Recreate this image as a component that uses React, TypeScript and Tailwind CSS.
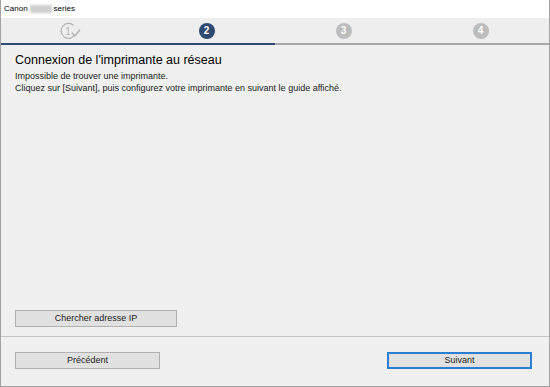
import React from "react";

function StepDone() {
  return (
    <svg width="22" height="18" viewBox="0 0 22 18" className="block">
      <path d="M13.5 3.2 A7.5 7.5 0 1 0 15.2 12.5" fill="none" stroke="#b4b4b4" strokeWidth="1.3" />
      <text x="8" y="12.6" textAnchor="middle" fontSize="10" fill="#b4b4b4" fontFamily="Liberation Sans, Arial, sans-serif">1</text>
      <path d="M12.3 11.2 L14.8 14 L19.5 8.2" fill="none" stroke="#b4b4b4" strokeWidth="1.6" strokeLinecap="round" strokeLinejoin="round" />
    </svg>
  );
}

function StepNum({ n, active }: { n: number; active?: boolean }) {
  return (
    <div
      className={
        "w-[16px] h-[16px] rounded-full flex items-center justify-center text-white text-[10px] font-bold leading-none " +
        (active ? "bg-[#2f4a70]" : "bg-[#bdbdbd]")
      }
    >
      {n}
    </div>
  );
}

export default function App() {
  return (
    <div
      className="w-[550px] h-[387px] flex flex-col bg-[#f0f0f0] border-l border-r border-b border-[#a3a3a3] text-[#1a1a1a]"
      style={{ fontFamily: '"Liberation Sans", Arial, sans-serif' }}
    >
      <div className="h-[18px] bg-white flex items-center pl-[3px] text-[8px] text-black">
        <span>Canon</span>
        <span className="inline-block w-[22px] h-[8px] mx-[2px] bg-[#cfcfcf] blur-[1px]" />
        <span>series</span>
      </div>
      <div className="h-[25px] bg-[#eeeeee] grid grid-cols-4 items-center">
        <div className="flex justify-center pl-[2px]">
          <StepDone />
        </div>
        <div className="flex justify-center">
          <StepNum n={2} active />
        </div>
        <div className="flex justify-center">
          <StepNum n={3} />
        </div>
        <div className="flex justify-center">
          <StepNum n={4} />
        </div>
      </div>
      <div className="flex h-[2px]">
        <div className="w-1/2 bg-[#2f4a70]" />
        <div className="w-1/2 bg-[#a8a8a8]" />
      </div>
      <div className="flex-1 flex flex-col px-[14px]">
        <div className="pt-[8px] text-[12.5px] leading-[15px] text-black">Connexion de l'imprimante au réseau</div>
        <div className="mt-[3px] text-[9px] leading-[11.5px] text-[#222]">
          <div>Impossible de trouver une imprimante.</div>
          <div>Cliquez sur [Suivant], puis configurez votre imprimante en suivant le guide affiché.</div>
        </div>
        <div className="flex-1" />
        <button className="w-[162px] h-[17px] bg-[#e1e1e1] border border-[#b0b0b0] text-[9px] text-[#222] flex items-center justify-center">
          Chercher adresse IP
        </button>
        <div className="h-[9px]" />
      </div>
      <div className="h-px bg-[#c6c6c6]" />
      <div className="h-[49px] flex items-start justify-between pl-[14px] pr-[17px] pt-[15px]">
        <button className="w-[145px] h-[17px] bg-[#e1e1e1] border border-[#b0b0b0] text-[9px] text-[#222] flex items-center justify-center">
          Précédent
        </button>
        <button className="w-[145px] h-[17px] bg-[#e1e1e1] border-2 border-[#2a7fd4] text-[9px] text-[#222] flex items-center justify-center">
          Suivant
        </button>
      </div>
    </div>
  );
}
